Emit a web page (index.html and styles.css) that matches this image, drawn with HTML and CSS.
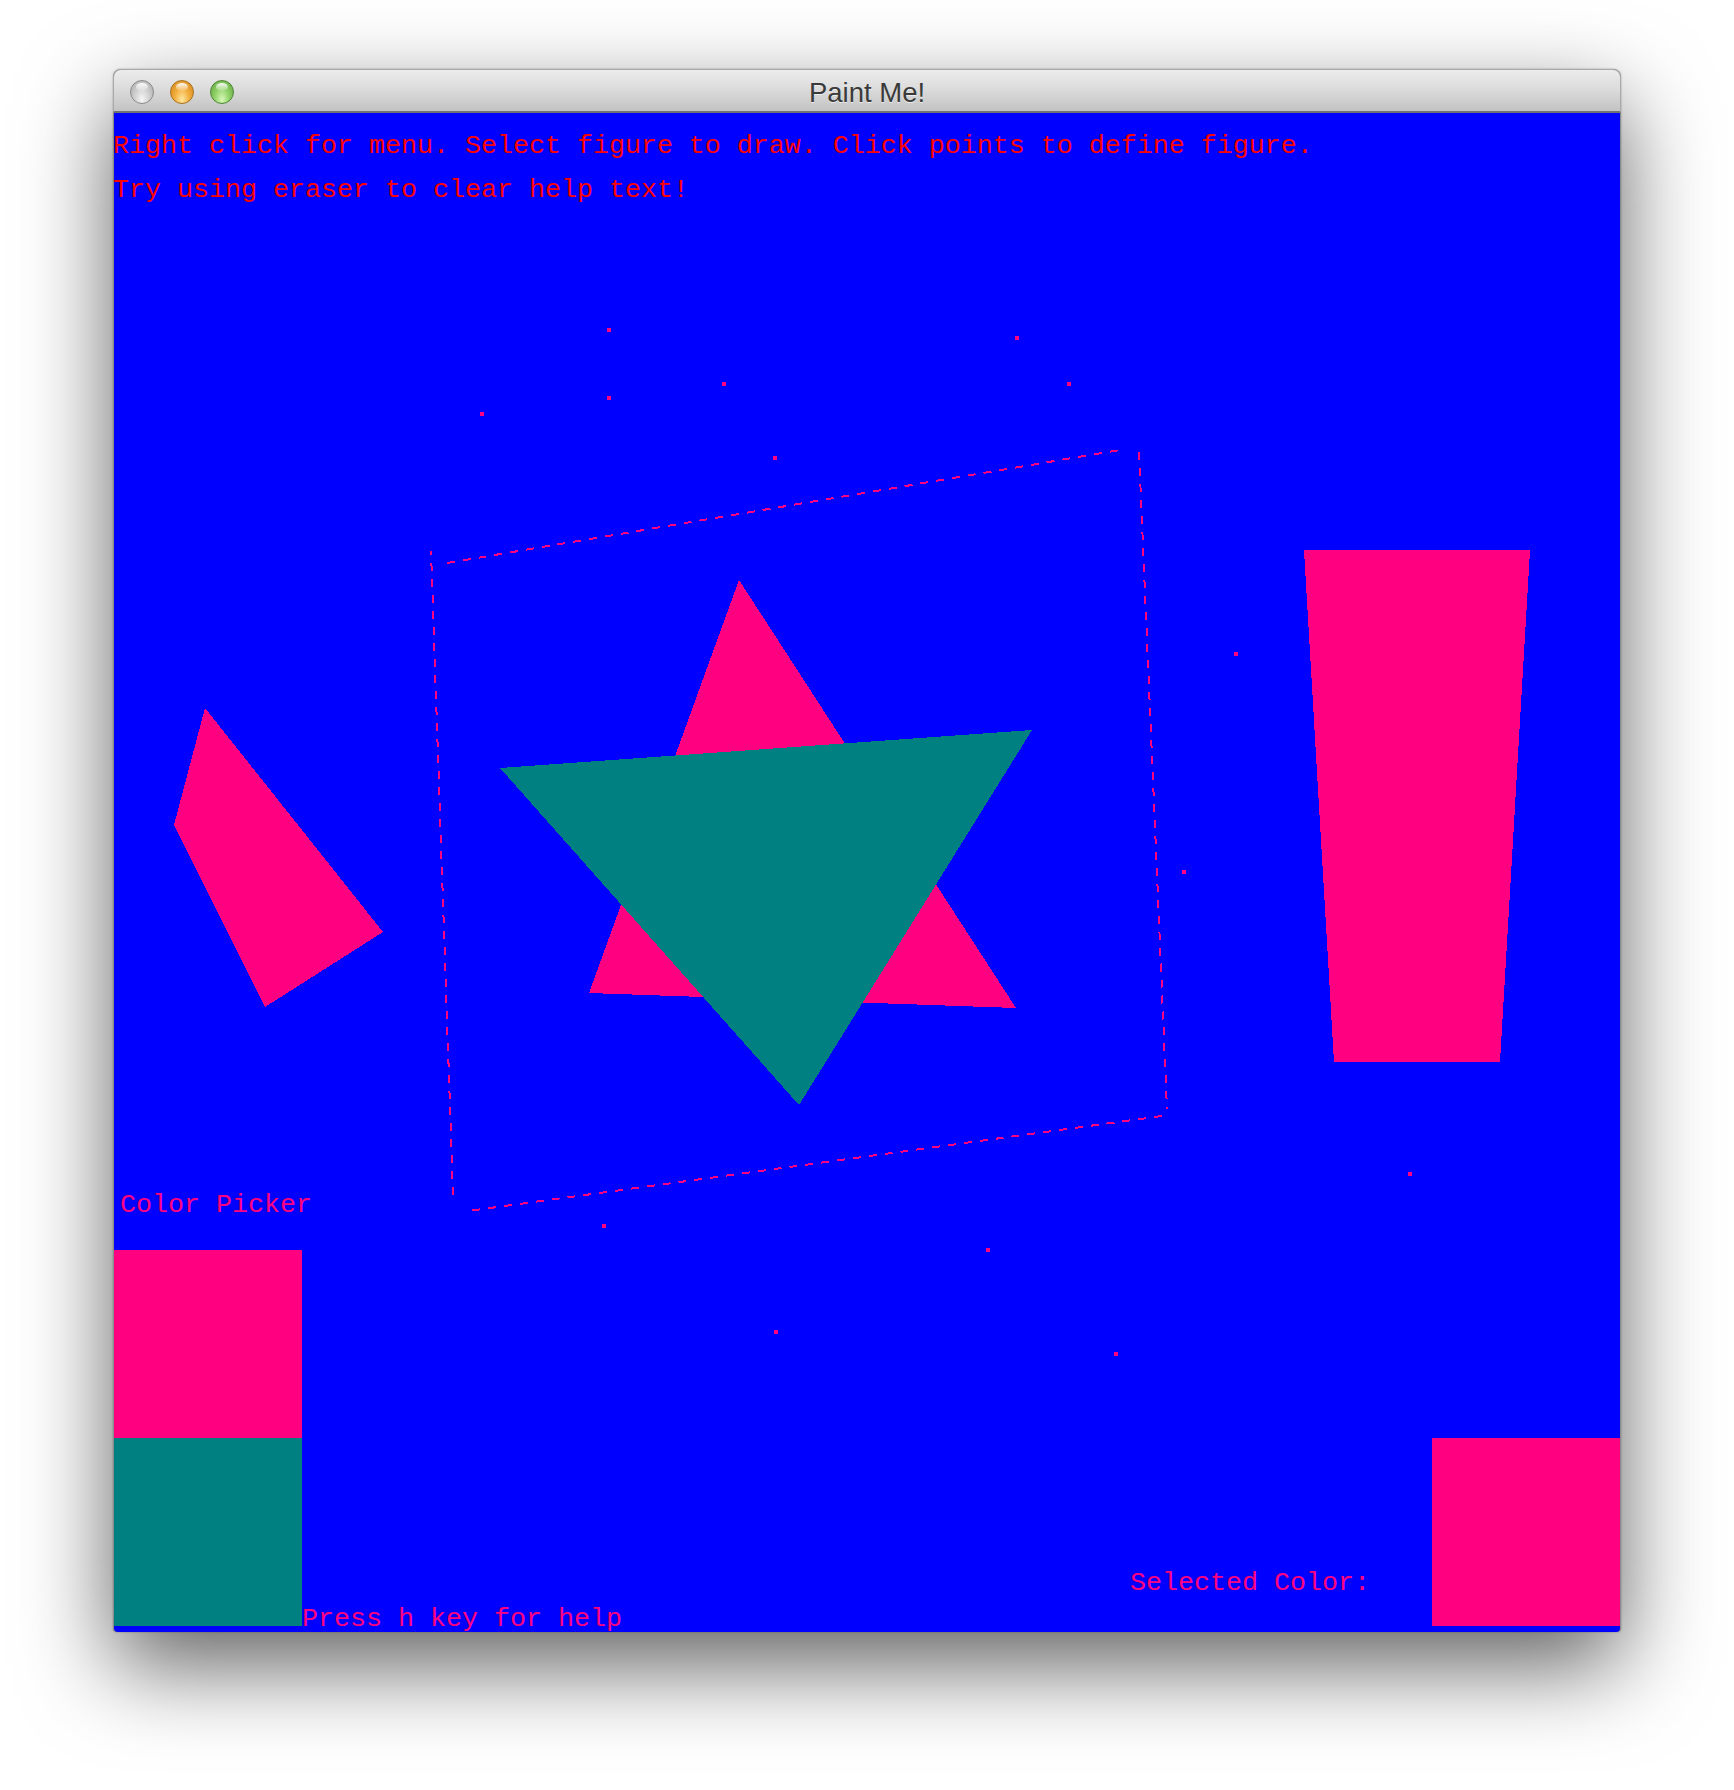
FILE: index.html
```html
<!DOCTYPE html>
<html>
<head>
<meta charset="utf-8">
<title>Paint Me!</title>
<link rel="stylesheet" href="styles.css">
</head>
<body>
<div class="window">
  <div class="titlebar">
    <div class="lights">
      <span class="light light-close"></span>
      <span class="light light-min"></span>
      <span class="light light-zoom"></span>
    </div>
    <div class="title">Paint Me!</div>
    <div class="title-spacer"></div>
  </div>
  <div class="canvas">
    <svg class="drawing" width="1506" height="1519" viewBox="0 0 1506 1519" shape-rendering="crispEdges">
      <polygon points="91,595 60,712 151,894 269,819" fill="#ff0080"/>
      <polygon points="625,467 475,880 902,895" fill="#ff0080"/>
      <polygon points="386,655 918,617 685,992" fill="#008080"/>
      <polygon points="1190,437 1416,437 1386,949 1220,949" fill="#ff0080"/>
      <g stroke="#ff0080" stroke-width="2" stroke-dasharray="8 8" fill="none">
        <line x1="333" y1="450" x2="1006" y2="337"/>
        <line x1="1025" y1="339" x2="1053" y2="996"/>
        <line x1="1048" y1="1003" x2="354" y2="1098"/>
        <line x1="339" y1="1082" x2="317" y2="438"/>
      </g>
      <g fill="#ff0080">
        <rect x="493" y="215" width="4" height="4"/>
        <rect x="901" y="223" width="4" height="4"/>
        <rect x="608" y="269" width="4" height="4"/>
        <rect x="953" y="269" width="4" height="4"/>
        <rect x="493" y="283" width="4" height="4"/>
        <rect x="366" y="299" width="4" height="4"/>
        <rect x="659" y="343" width="4" height="4"/>
        <rect x="1120" y="539" width="4" height="4"/>
        <rect x="1068" y="757" width="4" height="4"/>
        <rect x="1294" y="1059" width="4" height="4"/>
        <rect x="488" y="1111" width="4" height="4"/>
        <rect x="872" y="1135" width="4" height="4"/>
        <rect x="660" y="1217" width="4" height="4"/>
        <rect x="1000" y="1239" width="4" height="4"/>
      </g>
    </svg>
    <div class="help">
      <div class="help-line">Right click for menu. Select figure to draw. Click points to define figure.</div>
      <div class="help-line">Try using eraser to clear help text!</div>
    </div>
    <div class="canvas-spacer"></div>
    <div class="bottom-row">
      <div class="picker">
        <div class="picker-label">Color Picker</div>
        <div class="swatch swatch-pink"></div>
        <div class="swatch swatch-teal"></div>
      </div>
      <div class="press-help">Press h key for help</div>
      <div class="row-spacer"></div>
      <div class="selected-label">Selected Color:</div>
      <div class="swatch swatch-pink"></div>
    </div>
  </div>
</div>
</body>
</html>
```

FILE: styles.css
```css
html, body {
  margin: 0;
  padding: 0;
  background: #ffffff;
}

body {
  padding: 69px 0 0 113px;
  width: 1734px;
  height: 1790px;
  box-sizing: border-box;
  overflow: hidden;
}

.window {
  width: 1508px;
  border-radius: 8px 8px 4px 4px;
  box-shadow: 0 34px 90px rgba(0, 0, 0, 0.62), 0 0 2px rgba(0, 0, 0, 0.35);
  background: #8c8c8c;
}

.titlebar {
  height: 41px;
  border: 1px solid #a9a9a9;
  border-bottom: 2px solid #727272;
  border-radius: 8px 8px 0 0;
  background: linear-gradient(to bottom, #ececec 0%, #dcdcdc 45%, #c3c3c3 100%);
  display: grid;
  grid-template-columns: 1fr auto 1fr;
  align-items: start;
}

.lights {
  display: flex;
  gap: 16px;
  padding: 10px 0 0 16px;
}

.light {
  position: relative;
  width: 24px;
  height: 24px;
  border-radius: 50%;
  box-sizing: border-box;
  overflow: hidden;
}

.light::before {
  content: "";
  position: absolute;
  left: 5px;
  top: 2px;
  width: 12px;
  height: 8px;
  border-radius: 50%;
  background: linear-gradient(to bottom, rgba(255, 255, 255, 0.95), rgba(255, 255, 255, 0.1));
}

.light-close {
  border: 1px solid #8a8a8a;
  background: radial-gradient(ellipse at 50% 85%, #f6f6f6 0%, #d2d2d2 45%, #a9a9a9 100%);
}

.light-min {
  border: 1px solid #a8701c;
  background: radial-gradient(ellipse at 50% 85%, #ffe7a0 0%, #f3b040 45%, #d0821a 100%);
}

.light-zoom {
  border: 1px solid #4d8433;
  background: radial-gradient(ellipse at 50% 85%, #d8f7b8 0%, #92d46a 45%, #5fa23e 100%);
}

.title {
  font-family: "Liberation Sans", "DejaVu Sans", sans-serif;
  font-size: 27.5px;
  line-height: 36px;
  padding-top: 5px;
  color: #3a3a3a;
  text-shadow: 0 1px 0 rgba(255, 255, 255, 0.6);
  white-space: nowrap;
}

.canvas {
  position: relative;
  margin: 0 1px;
  height: 1519px;
  background: #0000ff;
  display: flex;
  flex-direction: column;
  border-radius: 0 0 4px 4px;
  font-family: "Liberation Mono", "DejaVu Sans Mono", monospace;
  font-size: 26.667px;
}

.drawing {
  position: absolute;
  left: 0;
  top: 0;
}

.help {
  position: relative;
  padding-top: 11px;
  color: #ff0000;
}

.help-line {
  line-height: 44px;
  height: 44px;
  white-space: pre;
  margin-left: -1px;
}

.canvas-spacer {
  flex: 1;
}

.bottom-row {
  position: relative;
  display: flex;
  align-items: flex-end;
  padding-bottom: 6px;
  color: #ff0080;
}

.picker {
  width: 188px;
  display: flex;
  flex-direction: column;
}

.picker-label {
  line-height: 30px;
  padding-left: 6px;
  margin-bottom: 30px;
  white-space: pre;
}

.swatch {
  flex: none;
  width: 188px;
  height: 188px;
}

.swatch-pink {
  background: #ff0080;
}

.swatch-teal {
  background: #008080;
}

.press-help {
  line-height: 30px;
  margin-bottom: -8px;
  white-space: pre;
}

.row-spacer {
  flex: 1;
}

.selected-label {
  line-height: 30px;
  margin-bottom: 28px;
  margin-right: 62px;
  white-space: pre;
}
```
